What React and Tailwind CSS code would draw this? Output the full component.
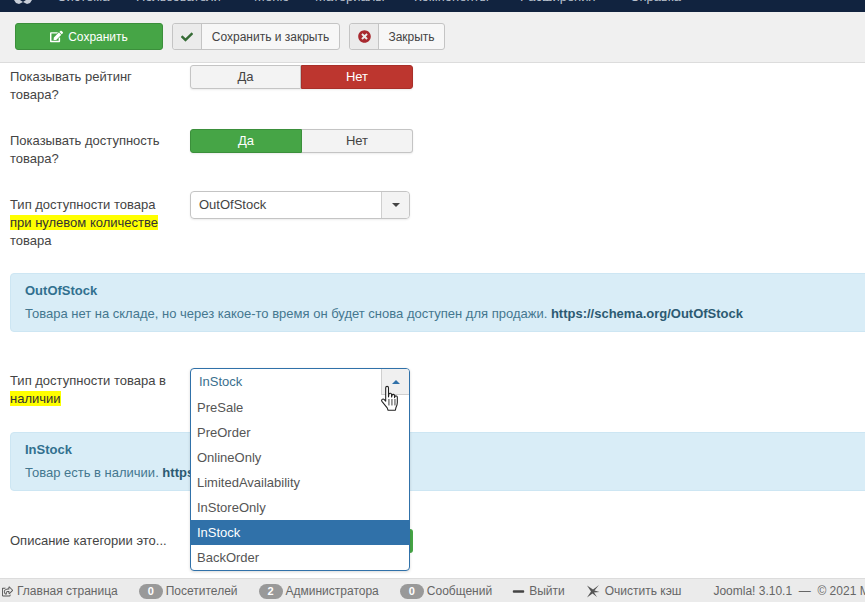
import React from "react";
import { FaEdit, FaCheck, FaTimesCircle, FaRegShareSquare, FaMinus } from "react-icons/fa";

const Caret = ({ up, className = "" }) => (
  <svg width="8" height="4" viewBox="0 0 8 4" className={className}>
    <polygon points={up ? "4,0 8,4 0,4" : "0,0 8,0 4,4"} fill="currentColor" />
  </svg>
);

const Toggle = ({ active }) => (
  <div className="flex w-[223px] h-[24px] text-[13px] leading-[22px] text-center rounded-[3px] shadow-[0_1px_2px_rgba(0,0,0,0.08)]">
    <div
      className={
        active === "yes"
          ? "w-[112px] rounded-l-[3px] bg-[#46a546] border border-[#3b8f3b] text-white font-medium"
          : "w-[111px] rounded-l-[3px] bg-[#f3f3f3] border border-[#c4c4c4] text-[#444]"
      }
    >
      Да
    </div>
    <div
      className={
        active === "no"
          ? "flex-1 rounded-r-[3px] bg-[#bd362f] border border-[#a92f29] text-white font-medium"
          : "flex-1 rounded-r-[3px] bg-[#f3f3f3] border border-l-0 border-[#c4c4c4] text-[#444]"
      }
    >
      Нет
    </div>
  </div>
);

const Label = ({ children, className = "" }) => (
  <div className={"w-[180px] shrink-0 text-[13px] leading-[18px] text-[#444] " + className}>{children}</div>
);

const Mark = ({ children }) => <span className="bg-[#ffff00] text-[#333]">{children}</span>;

const Alert = ({ title, children, className = "" }) => (
  <div className={"ml-[10px] -mr-[20px] rounded-l-[4px] bg-[#d9edf7] border border-[#cde6f3] text-[#44778f] px-[14px] " + className}>
    <div className="text-[13px] leading-[18px] font-bold text-[#31708f] mb-[5px]">{title}</div>
    <div className="text-[13px] leading-[18px] whitespace-nowrap">{children}</div>
  </div>
);

const ToolBtn = ({ icon, label, w }) => (
  <div className={"flex h-[27px] rounded-[3px] border border-[#c4c4c4] bg-[#f7f7f7] text-[12px] text-[#444] " + w}>
    <div className="w-[29px] shrink-0 flex items-center justify-center bg-[#ebebeb] border-r border-[#c4c4c4] rounded-l-[3px]">{icon}</div>
    <div className="flex-1 flex items-center justify-center">{label}</div>
  </div>
);

const Badge = ({ n }) => (
  <span className="inline-flex items-center justify-center w-[24px] h-[15px] rounded-full bg-[#999] text-white text-[11px] font-bold">{n}</span>
);

const Sep = () => <span className="w-px h-[15px] bg-[#bdbdbd]" />;

const options = ["PreSale", "PreOrder", "OnlineOnly", "LimitedAvailability", "InStoreOnly", "InStock", "BackOrder"];

function Dropdown() {
  return (
    <div className="absolute left-0 top-0 w-[220px] h-[203px] rounded-[4px] border border-[#3071a9] bg-white z-10 overflow-hidden text-[13px] shadow-[0_1px_3px_rgba(0,0,0,0.15)]">
      <div className="flex h-[26px]">
        <div className="flex-1 pl-[8px] leading-[25px] text-[#3a6f8e]">InStock</div>
        <div className="w-[28px] h-[26px] bg-[#f0f0f0] border-l border-b border-[#cfcfcf] flex items-center justify-center text-[#3071a9]">
          <Caret up />
        </div>
      </div>
      <div>
        {options.map((o) => (
          <div
            key={o}
            className={
              "h-[25px] leading-[25px] pl-[6px] " +
              (o === "InStock" ? "bg-[#3071a9] text-white font-medium" : "text-[#555]")
            }
          >
            {o}
          </div>
        ))}
      </div>
    </div>
  );
}

const nav = [
  ["Система", "w-[79px]"],
  ["Пользователи", "w-[118px]"],
  ["Меню", "w-[61px]"],
  ["Материалы", "w-[99px]"],
  ["Компоненты", "w-[106px]"],
  ["Расширения", "w-[110px]"],
  ["Справка", "w-[70px]"],
];

export default function App() {
  return (
    <div
      className="w-[865px] h-[602px] overflow-hidden flex flex-col bg-white text-[#444]"
      style={{ fontFamily: '"Liberation Sans", Arial, sans-serif' }}
    >
      <header className="h-[12px] shrink-0 bg-[#11233f] overflow-hidden flex items-start pl-[14px]">
        <svg width="18" height="4" viewBox="0 0 18 4" className="mr-[25px] text-[#c8ced8]">
          <path d="M0 0h6l3 2 3-2h6l-2 3-3 1-4-2-4 2-3-1z" fill="currentColor" />
        </svg>
        <nav className="flex -mt-[12px] text-[13px] leading-[18px] text-[#b9c1ce] whitespace-nowrap">
          {nav.map(([t, w]) => (
            <span key={t} className={w}>{t}</span>
          ))}
        </nav>
      </header>

      <div className="h-[51px] shrink-0 bg-[#f0f0f0] border-b border-[#dcdcdc] flex items-center gap-[9px] pl-[15px] pb-[1px]">
        <div className="w-[148px] h-[27px] rounded-[3px] bg-[#46a546] border border-[#3b8f3b] text-white text-[12px] font-medium flex items-center justify-center gap-[5px]">
          <FaEdit className="text-[13px]" /> Сохранить
        </div>
        <ToolBtn w="w-[168px]" label="Сохранить и закрыть" icon={<FaCheck className="text-[12px] text-[#356b35]" />} />
        <ToolBtn w="w-[96px]" label="Закрыть" icon={<FaTimesCircle className="text-[13px] text-[#a8292f]" />} />
      </div>

      <main className="flex-1 min-h-0 overflow-hidden">
        <div className="flex pt-[2px] pl-[10px]">
          <Label className="pt-[3px]">Показывать рейтинг<br />товара?</Label>
          <Toggle active="no" />
        </div>

        <div className="flex mt-[25px] pl-[10px]">
          <Label className="pt-[3px]">Показывать доступность<br />товара?</Label>
          <Toggle active="yes" />
        </div>

        <div className="flex mt-[23px] pl-[10px]">
          <Label className="pt-[5px]">Тип доступности товара<br /><Mark>при нулевом количестве</Mark><br />товара</Label>
          <div className="w-[220px] h-[28px] flex rounded-[4px] border border-[#c4c4c4] text-[13px] leading-[25px] text-[#444] shadow-[0_1px_2px_rgba(0,0,0,0.08)]">
            <div className="flex-1 pl-[8px]">OutOfStock</div>
            <div className="w-[28px] bg-[#f3f3f3] border-l border-[#cfcfcf] rounded-r-[4px] flex items-center justify-center text-[#444]">
              <Caret />
            </div>
          </div>
        </div>

        <Alert title="OutOfStock" className="mt-[23px] h-[59px] pt-[8px]">
          Товара нет на складе, но через какое-то время он будет снова доступен для продажи. <b className="text-[#2c5a72]">https://schema.org/OutOfStock</b>
        </Alert>

        <div className="flex mt-[36px] pl-[10px]">
          <Label className="pt-[4px]">Тип доступности товара в<br /><Mark>наличии</Mark></Label>
          <div className="relative w-[223px] h-[1px]">
            <Dropdown />
            <svg width="22" height="28" viewBox="0 0 20 26" className="absolute left-[189px] top-[17px] z-20">
              <path
                d="M6 2.5c0-1.6 2.6-1.6 2.6 0V11l.4-2.4c.3-1.4 2.4-1.2 2.4.3l.1 2.3.4-1.7c.4-1.2 2.3-1 2.3.4v1.8l.4-1c.5-1 2.2-.7 2.2.6v4.9c0 2.2-.5 3.4-1.3 4.8l-.5 2.4H8.2l-.8-2.2-4.9-6c-1-1.4.8-3 2.2-1.7L6 15z"
                fill="#fff"
                stroke="#222"
                strokeWidth="1"
                strokeLinejoin="round"
              />
              <path d="M9 13v6M11.8 13v6M14.6 13v6" stroke="#222" strokeWidth="0.8" />
            </svg>
          </div>
        </div>

        <Alert title="InStock" className="mt-[24px] h-[59px] pt-[8px]">
          Товар есть в наличии. <b className="text-[#2c5a72]">https://schema.org/InStock</b>
        </Alert>

        <div className="flex mt-[38px] pl-[10px]">
          <Label className="pt-[3px]">Описание категории это...</Label>
          <div className="w-[223px] h-[24px] flex justify-end">
            <div className="w-[112px] h-[24px] rounded-r-[3px] bg-[#46a546]" />
          </div>
        </div>
      </main>

      <footer className="h-[24px] shrink-0 bg-[#ebebeb] border-t border-[#dcdcdc] flex items-center whitespace-nowrap text-[12px] text-[#666] pl-[2px] pt-[1px] gap-[10px]">
        <span className="flex items-center gap-[4px]"><FaRegShareSquare className="text-[11px] text-[#555]" />Главная страница</span>
        <Sep />
        <span className="flex items-center gap-[3px] ml-[1px]"><Badge n="0" />Посетителей</span>
        <Sep />
        <span className="flex items-center gap-[3px] ml-[1px]"><Badge n="2" />Администратора</span>
        <Sep />
        <span className="flex items-center gap-[3px] ml-[1px]"><Badge n="0" />Сообщений</span>
        <Sep />
        <span className="flex items-center gap-[4px]"><FaMinus className="text-[13px] text-[#444]" />Выйти</span>
        <Sep />
        <span className="flex items-center gap-[5px] ml-[1px]">
          <svg width="14" height="14" viewBox="0 0 14 14">
            <path d="M1 1.5l6 4L13 1 8.5 6.5 13.5 8 8 8.5 11 13 6.5 9.5 1 13.5 5 7.5z" fill="#555" />
          </svg>
          Очистить кэш
        </span>
        <span className="ml-[22px]">Joomla! 3.10.1 &nbsp;— &nbsp;© 2021 My Site</span>
      </footer>
    </div>
  );
}
